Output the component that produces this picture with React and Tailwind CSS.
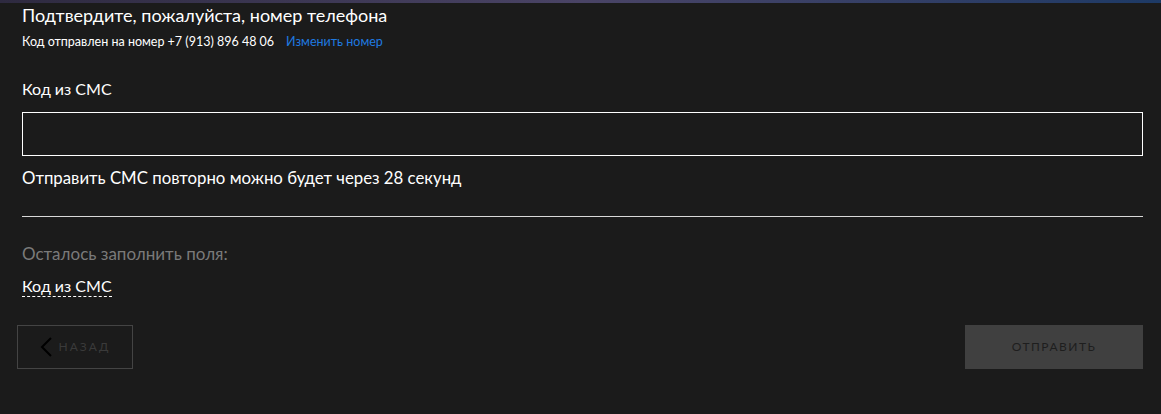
export default function App() {
  return (
    <div className="w-[1161px] h-[414px] bg-[#1b1b1b] overflow-hidden" style={{ fontFamily: 'Lato, "Noto Sans", sans-serif' }}>
      <div className="h-[3px] bg-gradient-to-r from-[#2e2a40] via-[#4a4466] to-[#1d3a66]" />
      <div className="px-[22px] pr-[18px]">
        <h1 className="mt-0 text-[18px] leading-[24px] text-white">Подтвердите, пожалуйста, номер телефона</h1>
        <div className="mt-[7px] flex items-center text-[12.5px] leading-[15px]">
          <span className="text-white">Код отправлен на номер +7 (913) 896 48 06</span>
          <span className="ml-[12px] text-[#1f7ae0]">Изменить номер</span>
        </div>
        <div className="mt-[30px] text-[16px] leading-[20px] text-white">Код из СМС</div>
        <div className="mt-[13px] h-[44px] border border-white" />
        <div className="mt-[12px] text-[16.8px] leading-[20px] text-white">Отправить СМС повторно можно будет через 28 секунд</div>
        <div className="mt-[28px] h-px bg-[#d9d9d9]" />
        <div className="mt-[27px] text-[17px] leading-[20px] text-[#7a7a7a]">Осталось заполнить поля:</div>
        <div className="mt-[12px] inline-block text-[16px] leading-[20px] text-white border-b border-dashed border-white">Код из СМС</div>
      </div>
      <div className="mt-[27px] pl-[17px] pr-[18px] flex justify-between">
        <div className="w-[116px] h-[44px] border border-[#444] flex items-center justify-center gap-[7px]">
          <svg width="12" height="20" viewBox="0 0 12 20" fill="none">
            <path d="M11 1 L2 10 L11 19" stroke="#000" strokeWidth="2" />
          </svg>
          <span className="text-[12px] tracking-[2px] text-[#3a3a3a]">НАЗАД</span>
        </div>
        <div className="w-[178px] h-[44px] bg-[#404040] flex items-center justify-center">
          <span className="text-[12px] tracking-[1.5px] text-[#1e1e1e]">ОТПРАВИТЬ</span>
        </div>
      </div>
    </div>
  );
}
